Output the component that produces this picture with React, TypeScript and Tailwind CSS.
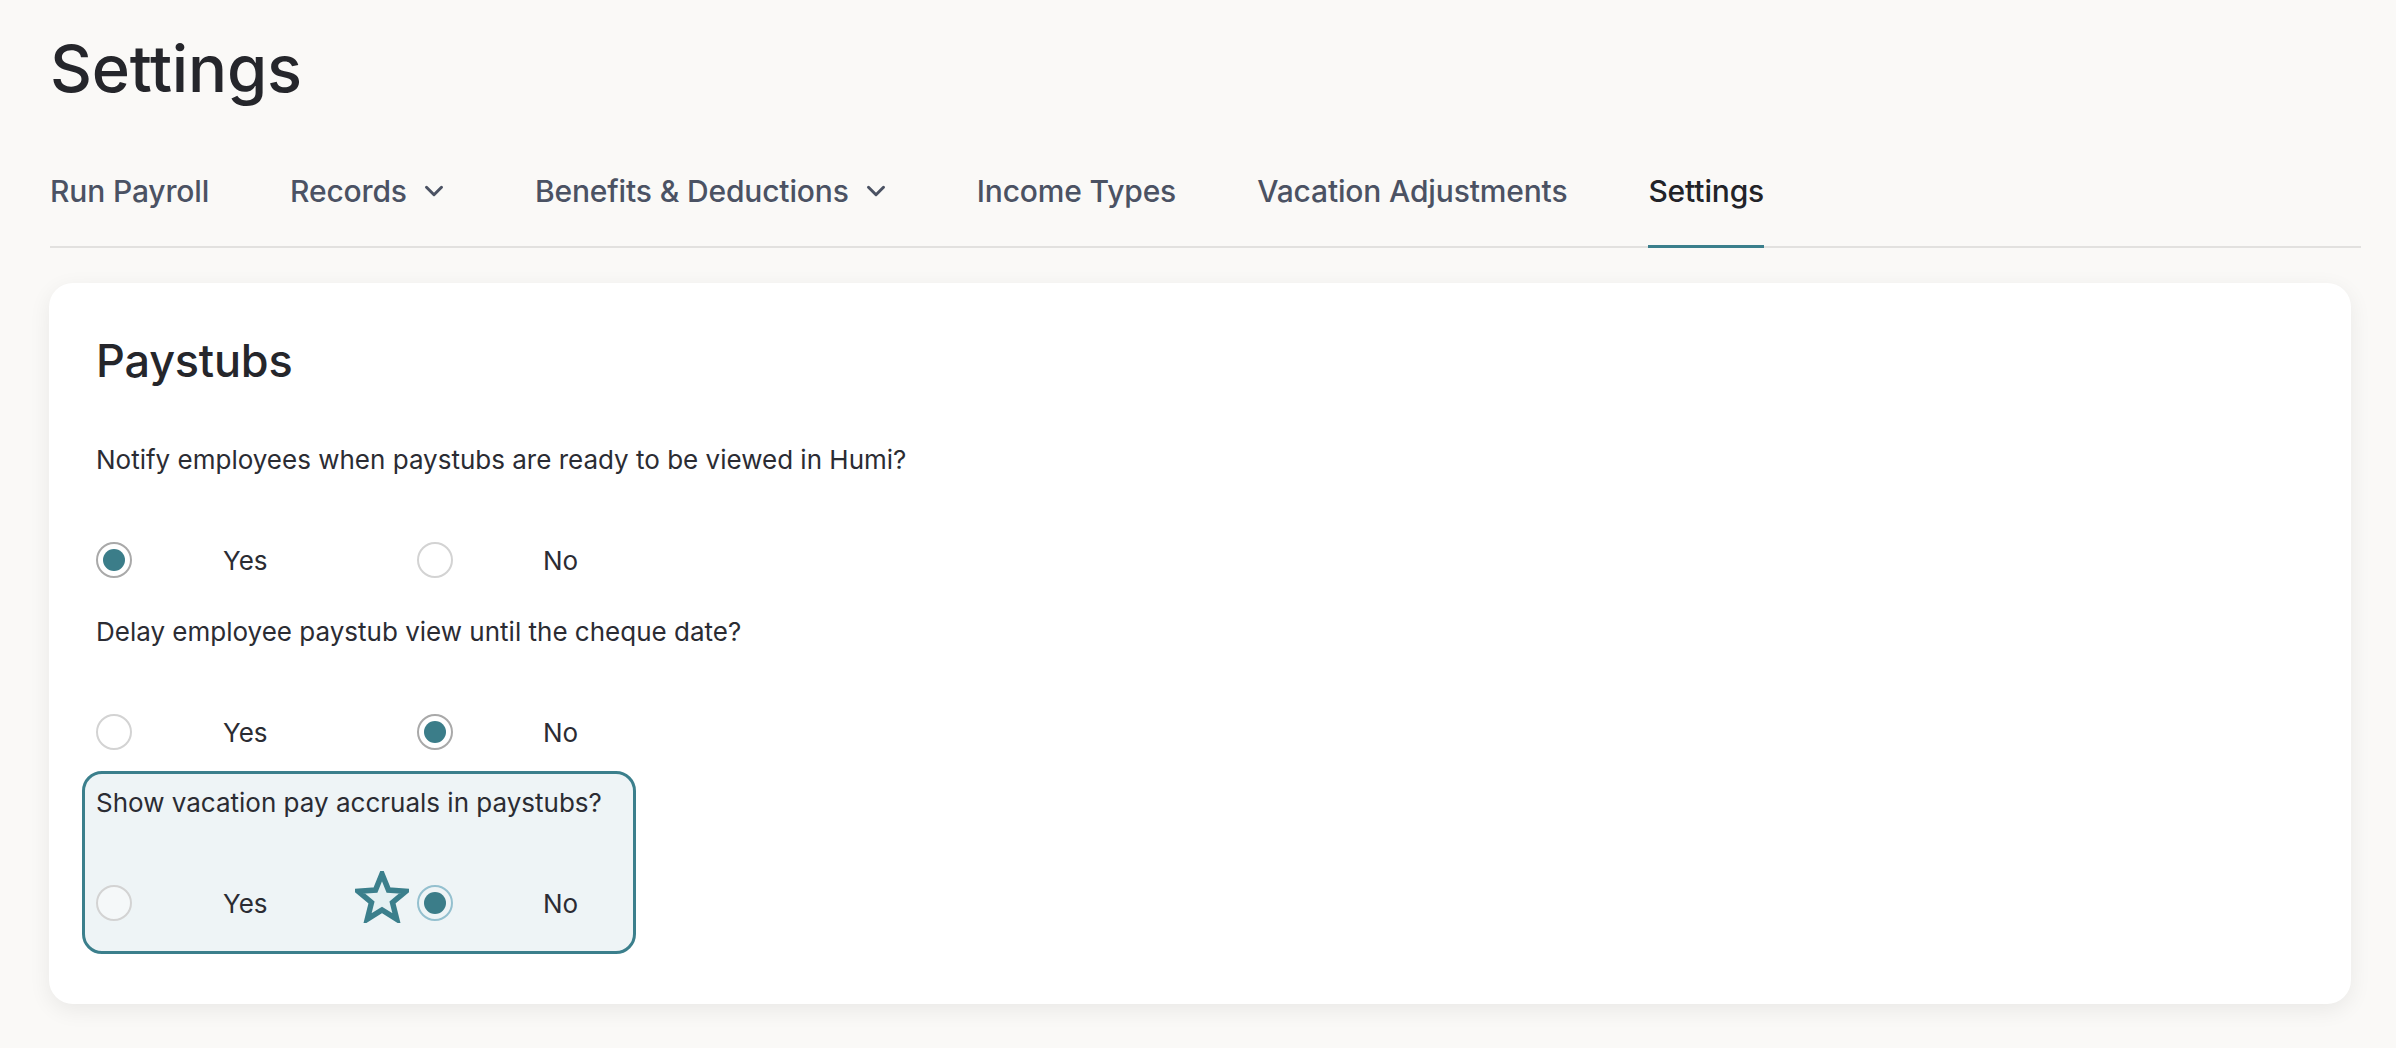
import { ChevronDown } from "lucide-react";

const TABS = [
    { label: "Run Payroll" },
    { label: "Records", menu: true },
    { label: "Benefits & Deductions", menu: true },
    { label: "Income Types" },
    { label: "Vacation Adjustments" },
    { label: "Settings", active: true },
];

interface RadioProps {
    checked: boolean;
    soft?: boolean;
}

function Radio({ checked, soft }: RadioProps) {
    if (!checked) {
        return <div className="w-[36px] h-[36px] shrink-0 rounded-full border-[2.5px] border-[#d3d3d3] bg-white/40" />;
    }
    return (
        <div
            className={`w-[36px] h-[36px] shrink-0 rounded-full border-[2.5px] flex items-center justify-center ${
                soft ? "border-[#94c0cf]" : "border-[#a9a9a9] bg-white"
            }`}
        >
            <div className="w-[22px] h-[22px] rounded-full bg-[#3b7d89]" />
        </div>
    );
}

function Star() {
    return (
        <svg width="54" height="52" viewBox="0 0 54 52" className="absolute left-[-62px] top-[-12px]">
            <polygon
                points="27,3 33.5,19.1 50.8,20.3 37.5,31.4 41.7,48.2 27,39 12.3,48.2 16.5,31.4 3.2,20.3 20.5,19.1"
                fill="#e4f0f2"
                stroke="#3b7f8c"
                strokeWidth="5.5"
                strokeLinejoin="miter"
            />
        </svg>
    );
}

interface QuestionProps {
    text: string;
    value: "yes" | "no";
    soft?: boolean;
    star?: boolean;
}

function Question({ text, value, soft, star }: QuestionProps) {
    return (
        <div>
            <div className="text-[26px] leading-[40px] text-[#2b2c33]">{text}</div>
            <div className="flex mt-[60px] h-[40px] text-[26px] text-[#2b2c33]">
                <div className="flex items-center w-[321px]">
                    <Radio checked={value === "yes"} soft={soft} />
                    <span className="ml-[91px]">Yes</span>
                </div>
                <div className="relative flex items-center w-[200px]">
                    {star && <Star />}
                    <Radio checked={value === "no"} soft={soft} />
                    <span className="ml-[90px]">No</span>
                </div>
            </div>
        </div>
    );
}

export default function App() {
    return (
        <div className="min-h-screen h-[1048px] bg-[#faf9f7] pl-[50px] pr-[35px] font-['Inter',sans-serif] antialiased">
            <h1 className="pt-[29px] text-[65px] leading-[80px] font-medium text-[#25262b] tracking-[-0.2px]">Settings</h1>

            <nav className="mt-[62px] flex gap-[81px] border-b-2 border-[#e2e1df]">
                {TABS.map(tab => (
                    <div
                        key={tab.label}
                        className={`flex items-start h-[77px] border-b-[3px] -mb-[2px] ${
                            tab.active ? "border-[#3b7f8c] text-[#222328]" : "border-transparent text-[#4b5263]"
                        } ${tab.menu ? "pr-[5px]" : ""}`}
                    >
                        <span className="text-[30px] leading-[40px] font-medium tracking-[-0.15px]">{tab.label}</span>
                        {tab.menu && (
                            <ChevronDown size={30} strokeWidth={2.4} className="ml-[12px] mt-[5px] text-[#4b5263]" />
                        )}
                    </div>
                ))}
            </nav>

            <div className="mt-[35px] mr-[10px] -ml-[1px] bg-white rounded-[24px] shadow-[0_6px_22px_rgba(0,0,0,0.07)] pl-[47px] pt-[50px] pb-[50px]">
                <h2 className="text-[45px] leading-[56px] font-medium text-[#25262b] tracking-[-0.2px]">Paystubs</h2>

                <div className="mt-[51px]">
                    <Question text="Notify employees when paystubs are ready to be viewed in Humi?" value="yes" />
                </div>

                <div className="mt-[32px]">
                    <Question text="Delay employee paystub view until the cheque date?" value="no" />
                </div>

                <div className="mt-[19px] -ml-[14px] w-[554px] border-[3px] border-[#3b7f8c] rounded-[20px] bg-[#eef4f6] pl-[11px] pt-[9px] pb-[28px]">
                    <Question text="Show vacation pay accruals in paystubs?" value="no" soft star />
                </div>
            </div>
        </div>
    );
}
